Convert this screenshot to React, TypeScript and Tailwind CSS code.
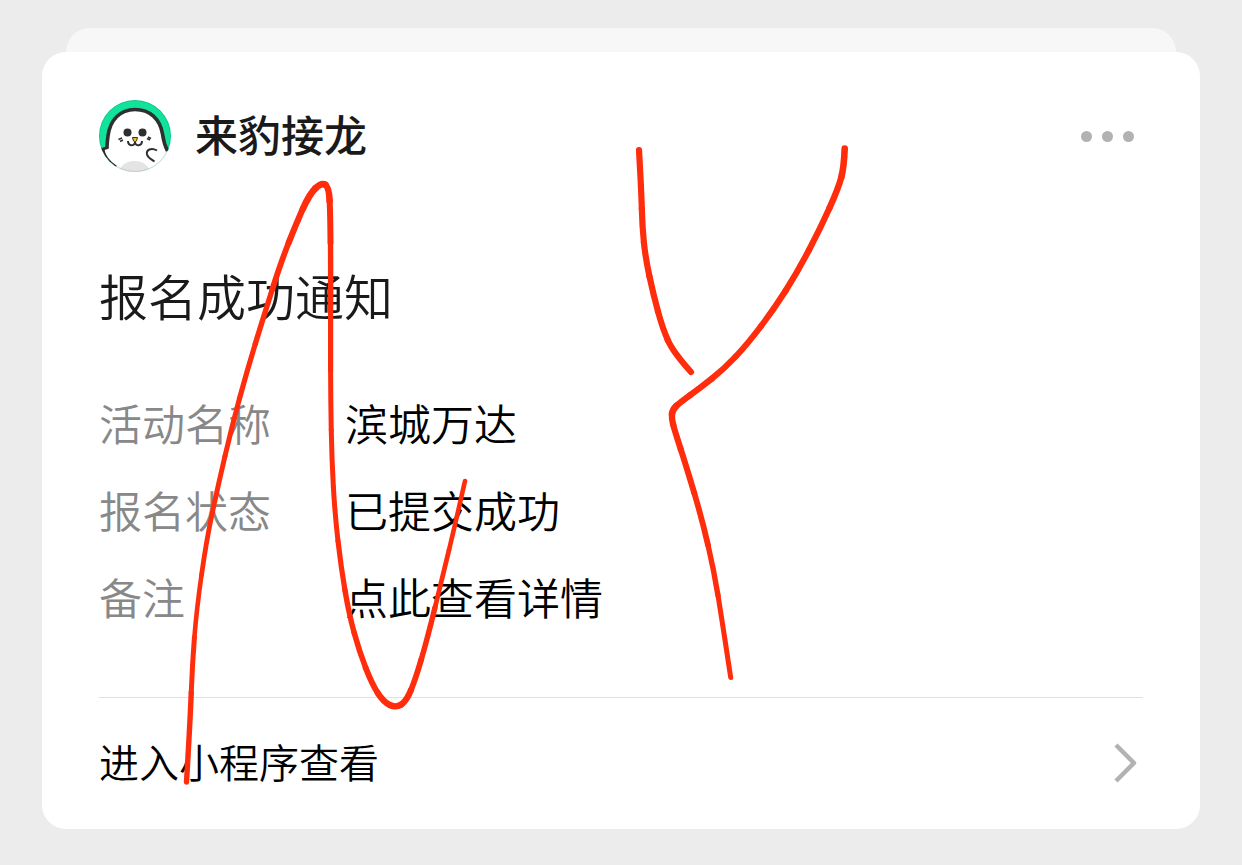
type Point = [x: number, y: number, width: number];

const details = [
  { label: "活动名称", value: "滨城万达" },
  { label: "报名状态", value: "已提交成功" },
  { label: "备注", value: "点此查看详情" },
];

// Pen strokes as x, y and pen width at each point
const strokes: Point[][] = [
  [
    [186.5, 782, 6], [190.2, 720, 5.4], [192.3, 665, 5], [196.5, 610, 4.6], [206.5, 540, 4.8],
    [218, 486, 5], [232, 426, 5], [247, 371, 5.2], [263.5, 317, 5.4], [281, 262, 5.8], [296.5, 223, 6.2],
    [309.5, 194, 6.6], [321.5, 182.5, 6.8], [329, 187, 6.6], [330.3, 215, 6], [330.7, 270, 5.4],
    [330.5, 340, 5.2], [330.7, 400, 5], [331.8, 460, 5], [335, 515, 5], [341, 567, 5.2],
    [349, 614, 5.4], [359.5, 652, 5.6], [372, 684, 6], [383.5, 702, 6.2], [396, 708, 6.4],
    [406.5, 701, 6.2], [415.5, 679, 5.8], [427, 640, 5.4], [443, 575, 4.8], [455, 525, 4.6], [465, 481, 4.4],
  ],
  [
    [639, 150, 6.4], [641.3, 190, 6.2], [642.3, 227, 6.2], [645.5, 258, 6.2], [653.5, 295, 6.2],
    [662.5, 328, 6.2], [673, 352, 6.2], [691, 372, 6.2],
  ],
  [
    [844.7, 148.5, 6.6], [844, 167, 6.6], [838.5, 188, 6.4], [820.5, 228, 6.2], [797.5, 272, 6.2],
    [774, 309, 6.2], [747.5, 344, 6.2], [724, 369, 6.2], [700, 388, 6.2], [680, 402.5, 6.4],
    [672.5, 409.5, 6.6], [671.5, 418.5, 6.4], [675, 431.5, 6.2], [686.5, 467, 6], [702, 519, 5.8],
    [714, 571, 5.4], [722, 620, 5], [730.7, 677.5, 4.4],
  ],
];

function Stroke({ points }: { points: Point[] }) {
  const last = points.length - 1;
  const middle = (i: number) =>
    `${(points[i][0] + points[i + 1][0]) / 2} ${(points[i][1] + points[i + 1][1]) / 2}`;

  return (
    <>
      {points.slice(1, -1).map(([x, y, width], index) => {
        const i = index + 1;
        const from = i === 1 ? `${points[0][0]} ${points[0][1]}` : middle(i - 1);
        const to = i === last - 1 ? `${points[last][0]} ${points[last][1]}` : middle(i);
        return <path key={i} d={`M${from}Q${x} ${y} ${to}`} strokeWidth={width} />;
      })}
    </>
  );
}

function Scribble() {
  return (
    <svg
      className="pointer-events-none absolute left-0 top-0"
      width="1242"
      height="865"
      viewBox="0 0 1242 865"
      fill="none"
      stroke="#ff2d0c"
      strokeLinecap="round"
      aria-hidden="true"
    >
      {strokes.map((points, i) => (
        <Stroke key={i} points={points} />
      ))}
    </svg>
  );
}

function Avatar() {
  return (
    <svg className="size-[72px] shrink-0" viewBox="0 0 72 72" fill="none" aria-hidden="true">
      <defs>
        <clipPath id="avatar-clip">
          <circle cx="36" cy="36" r="36" />
        </clipPath>
      </defs>
      <g clipPath="url(#avatar-clip)">
        <rect width="72" height="72" fill="#12e39b" />
        <path
          d="M8 48C8 44 8.500 40 9 36C11 20 21 9.500 36 9.500C51 9.500 61 19 63.500 34C64 41 65.500 46 68.500 50L74 60V74H20L16 68L4 58L4 49Z"
          fill="#fff"
        />
        <path d="M8 48C8 44 8.500 40 9 36C11 20 21 9.500 36 9.500C51 9.500 61 19 63.500 34C64.500 41 66 46 68.500 51" stroke="#2d2f31" strokeWidth="3.600" />
        <path d="M9 49C8 48 6 48 4 49C5 56 9 62 17 67" stroke="#2d2f31" strokeWidth="3" />
        <path d="M6 50C8 49 10 49 12 51L18 63C11 60 7 56 6 50Z" fill="#fff" />
        <ellipse cx="35.500" cy="72" rx="15" ry="11" fill="#e4e4e4" />
        <circle cx="28.500" cy="32.500" r="4" fill="#2d2f31" />
        <circle cx="43.500" cy="32.500" r="4" fill="#2d2f31" />
        <path d="M33.500 37.500H38.500L37.500 41L36 42L34.500 41Z" fill="#f5bf22" stroke="#2d2f31" />
        <path d="M29 41C29 46.500 36 46.500 36 42C36 46.500 43 46.500 43 41" stroke="#2d2f31" strokeWidth="2" />
        <path d="M19.500 39.500L23 38M21 41.500L24 40M48 38.500L51 40M49 37L52 38.500" stroke="#2d2f31" strokeWidth="1.400" />
        <path d="M58 50.500C52 47 47 50 48 54.500C49 58 52 59 55.500 61.500" stroke="#2d2f31" strokeWidth="2" />
      </g>
      <circle cx="36" cy="36" r="35.500" stroke="#000" strokeOpacity="0.12" />
    </svg>
  );
}

export default function App() {
  return (
    <div className="relative min-h-screen overflow-hidden bg-[#ececec] px-[42px] pb-9 pt-7 font-['Noto_Sans_CJK_SC',sans-serif] text-black">
      <div className="mx-6 h-6 rounded-t-3xl bg-[#f7f7f7]" />
      <main className="rounded-3xl bg-white px-[57px] pt-12">
        <header className="flex h-[72px] items-center gap-6">
          <Avatar />
          <h1 className="flex-1 pb-[6px] text-[43px] font-medium leading-[66px] text-[#1a1a1a]">来豹接龙</h1>
          <button type="button" aria-label="更多" className="flex gap-[10px] py-4 pr-[9px]">
            <span className="size-[11px] rounded-full bg-[#b2b2b2]" />
            <span className="size-[11px] rounded-full bg-[#b2b2b2]" />
            <span className="size-[11px] rounded-full bg-[#b2b2b2]" />
          </button>
        </header>

        <h2 className="mt-[87px] text-[49px] font-[350] leading-[72px] text-[#1a1a1a]">报名成功通知</h2>

        <dl className="mt-[61px] flex flex-col gap-[27px] text-[43px] font-[350] leading-[60px]">
          {details.map(({ label, value }) => (
            <div key={label} className="flex">
              <dt className="w-[246px] shrink-0 text-[#888888]">{label}</dt>
              <dd>{value}</dd>
            </div>
          ))}
        </dl>

        <a
          href="#detail"
          className="mt-[71px] flex h-[132px] items-center justify-between border-t border-[#e0e0e0] text-[40px] font-[350]"
        >
          <span className="pb-[6px]">进入小程序查看</span>
          <svg className="mb-[2px] mr-[5px]" width="24" height="40" viewBox="0 0 24 40" fill="none" aria-hidden="true">
            <path d="M2 2L20 20L2 38" stroke="#b2b2b2" strokeWidth="4.500" strokeLinejoin="round" />
          </svg>
        </a>
      </main>
      <Scribble />
    </div>
  );
}
